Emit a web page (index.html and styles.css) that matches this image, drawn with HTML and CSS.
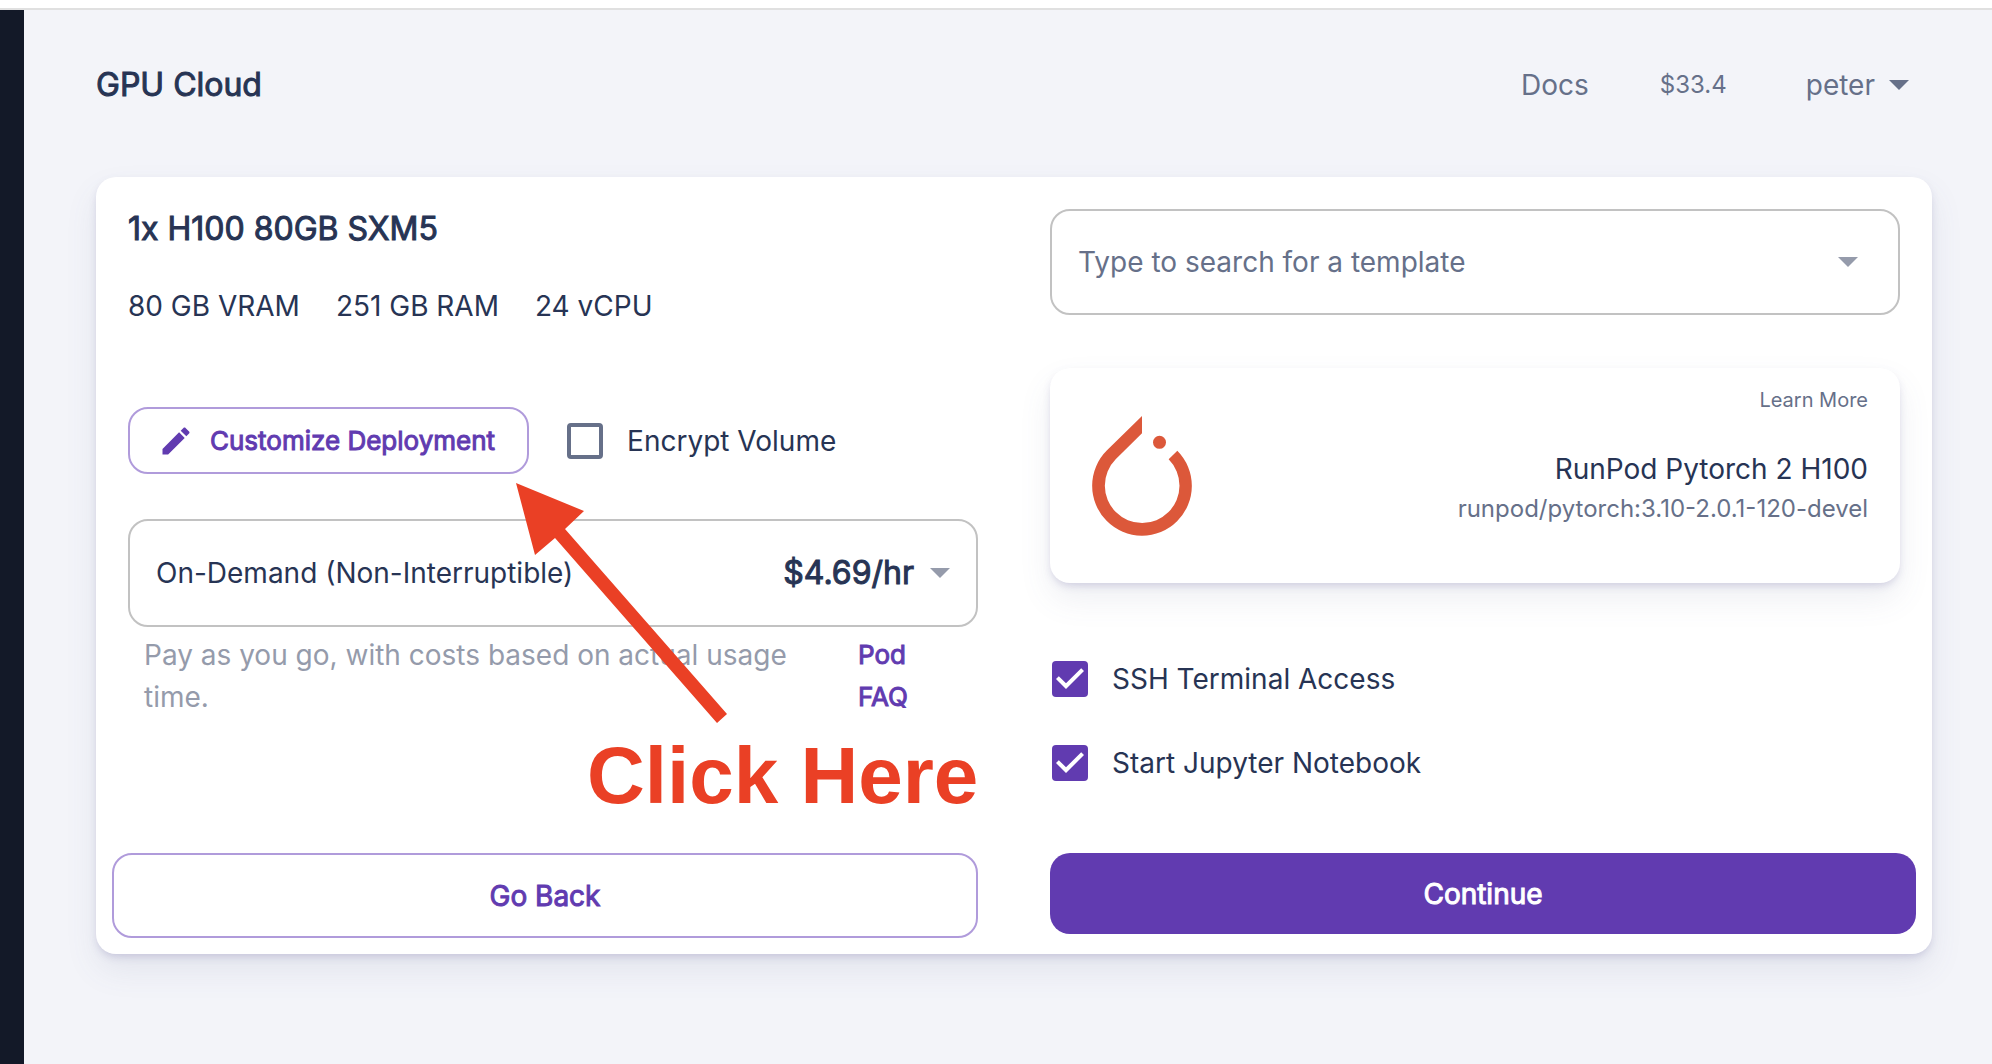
FILE: index.html
```html
<!DOCTYPE html>
<html lang="en">
<head>
<meta charset="utf-8">
<meta name="viewport" content="width=device-width, initial-scale=1">
<title>GPU Cloud</title>
<link rel="stylesheet" href="styles.css">
</head>
<body>
<div class="topbar"></div>
<div class="shell">
  <aside class="sidebar"></aside>
  <main class="page">
    <header class="header">
      <h1 class="title">GPU Cloud</h1>
      <nav class="nav">
        <a class="nav-link" href="#docs">Docs</a>
        <span class="balance">$33.4</span>
        <button class="user" type="button">peter <span class="caret"></span></button>
      </nav>
    </header>

    <section class="card">
      <div class="columns">
        <div class="column">
          <h2 class="title">1x H100 80GB SXM5</h2>
          <div class="specs"><span>80 GB VRAM</span><span>251 GB RAM</span><span>24 vCPU</span></div>
          <div class="options">
            <button class="customize" type="button">
              <svg class="pencil" viewBox="0 0 24 24" aria-hidden="true"><path d="M3 17.25V21h3.750L17.810 9.940l-3.750-3.750L3 17.250zM20.710 7.040c.39-.39.39-1.020 0-1.410l-2.340-2.340c-.39-.39-1.020-.39-1.410 0l-1.830 1.830 3.750 3.750 1.830-1.830z"/></svg>
              Customize Deployment
            </button>
            <label class="check"><input type="checkbox"> Encrypt Volume</label>
          </div>
          <div class="field pricing">
            <select class="control" aria-label="Pricing">
              <option>On-Demand (Non-Interruptible)</option>
            </select>
            <span class="price">$4.69/hr</span>
            <span class="caret muted"></span>
          </div>
          <div class="help">
            <p>Pay as you go, with costs based on actual usage time.</p>
            <a class="faq" href="#faq">Pod FAQ</a>
          </div>
          <div class="callout">
            <svg class="arrow" viewBox="0 0 212 240" aria-hidden="true"><path d="M0 0L68 28L49 46L211 231L201 240L39 55L19 72Z"/></svg>
            <span class="callout-text">Click Here</span>
          </div>
        </div>

        <div class="column">
          <div class="field search">
            <input class="control" type="text" placeholder="Type to search for a template" aria-label="Template">
            <span class="caret muted"></span>
          </div>
          <article class="template">
            <svg class="logo" viewBox="156 168 300 360" aria-hidden="true"><path d="M306 168L201 271A149.500 149.500 0 1 0 412 272L386 298A112 112 0 1 1 227 298L306 220Z"/><circle cx="358.500" cy="247" r="19.500"/></svg>
            <div class="template-text">
              <a class="learn" href="#learn">Learn More</a>
              <span class="template-name">RunPod Pytorch 2 H100</span>
              <span class="template-image">runpod/pytorch:3.10-2.0.1-120-devel</span>
            </div>
          </article>
          <div class="checks">
            <label class="check"><input type="checkbox" checked> SSH Terminal Access</label>
            <label class="check"><input type="checkbox" checked> Start Jupyter Notebook</label>
          </div>
        </div>
      </div>
      <div class="actions">
        <button class="btn btn-outline" type="button">Go Back</button>
        <button class="btn btn-solid" type="button">Continue</button>
      </div>
    </section>
  </main>
</div>
</body>
</html>
```

FILE: styles.css
```css
:root {
  --ink: #273454;
  --slate: #667089;
  --muted: #959bab;
  --purple: #613bb0;
  --lilac: #b09bdb;
  --line: #c2c2c2;
  --shadow: 0 4px 8px -2px rgba(90, 85, 150, .25), 0 16px 32px rgba(90, 95, 140, .1);
}
* { box-sizing: border-box; }
body {
  margin: 0;
  min-height: 100vh;
  display: flex;
  flex-direction: column;
  background: #f3f4f9;
  color: var(--ink);
  font: 400 28px/42px Inter, sans-serif;
}
h1, h2, p { margin: 0; }
a { color: inherit; text-decoration: none; }
button, input, select { font: inherit; color: inherit; margin: 0; }
button { cursor: pointer; }

.topbar { height: 10px; background: #fff; border-bottom: 2px solid #e0e0e0; }
.shell { flex: 1; display: flex; }
.sidebar { flex: 0 0 24px; background: #131928; }
.page { flex: 1; min-width: 0; padding: 54px 60px 54px 72px; }

.header { display: flex; justify-content: space-between; align-items: center; height: 42px; margin-bottom: 71px; }
.title { font-size: 32px; line-height: 40px; font-weight: 400; }
.title, .price, .customize, .faq, .btn { -webkit-text-stroke: 1px currentColor; }
.nav { display: flex; align-items: center; gap: 71px; padding-right: 23px; color: var(--slate); }
.balance { font-size: 24px; }
.user { display: flex; align-items: center; gap: 14px; padding: 0 0 0 8px; border: 0; background: none; }

.caret { flex: none; border: 10px solid transparent; border-top-color: var(--slate); border-bottom: 0; }
.caret.muted { border-top-color: var(--muted); }

.card { background: #fff; border-radius: 20px; box-shadow: var(--shadow); }
.columns { display: grid; grid-template-columns: 1fr 1fr; gap: 72px; padding: 32px 32px 69px; }
.column { position: relative; min-width: 0; }
.specs { display: flex; gap: 36px; margin-top: 36px; }

.options { display: flex; align-items: center; gap: 38px; margin-top: 80px; }
.customize {
  display: flex;
  align-items: center;
  gap: 16px;
  height: 67px;
  padding: 0 32px 0 28px;
  border: 2px solid var(--lilac);
  border-radius: 20px;
  background: none;
  color: var(--purple);
  font-size: 26px;
}
.pencil { width: 36px; height: 36px; fill: currentColor; }

.check { display: flex; align-items: center; gap: 24px; }
.check input { flex: none; appearance: none; width: 36px; height: 36px; border: 4px solid var(--slate); border-radius: 4px; }
.check input:checked {
  border: 0;
  background: var(--purple) url("data:image/svg+xml,%3Csvg xmlns='http://www.w3.org/2000/svg' viewBox='3 3 18 18'%3E%3Cpath fill='%23fff' d='M10 17l-5-5 1.410-1.410L10 14.170l7.590-7.590L19 8z'/%3E%3C/svg%3E");
}

.field { display: flex; align-items: center; border: 2px solid var(--line); border-radius: 20px; }
.control { flex: 1; min-width: 0; height: 42px; padding: 0; border: 0; outline: 0; background: none; appearance: none; }
.control::placeholder { color: var(--slate); opacity: 1; }
.pricing { height: 108px; margin-top: 45px; padding: 0 26px; gap: 16px; }
.price { font-size: 32px; }
.search { height: 106px; padding: 0 40px 0 26px; }

.help { display: flex; gap: 68px; margin-top: 7px; padding: 0 64px 0 16px; color: var(--muted); }
.help p { flex: 1; }
.faq { flex: 0 0 56px; color: var(--purple); font-size: 26px; }

.callout { position: absolute; left: 388px; top: 274px; display: flex; flex-direction: column; color: #ea4025; pointer-events: none; }
.arrow { width: 212px; height: 240px; fill: currentColor; }
.callout-text { margin: 13px 0 0 71px; font: 700 80px/80px "Liberation Sans", Arial, sans-serif; white-space: nowrap; }

.template { display: flex; justify-content: space-between; align-items: center; height: 215px; margin-top: 53px; padding: 0 32px 0 42px; border-radius: 20px; box-shadow: var(--shadow); }
.logo { width: 100px; height: 120px; fill: #dc583a; }
.template-text { display: flex; flex-direction: column; align-self: flex-start; text-align: right; padding-top: 16px; }
.learn { color: var(--slate); font-size: 20px; line-height: 32px; }
.template-name { margin-top: 32px; }
.template-image { color: var(--slate); font-size: 24px; line-height: 38px; }

.checks { display: flex; flex-direction: column; gap: 42px; margin-top: 75px; padding-left: 2px; }

.actions { display: grid; grid-template-columns: 1fr 1fr; align-items: start; gap: 72px; padding: 0 16px 16px; }
.btn { border-radius: 20px; }
.btn-outline { height: 85px; border: 2px solid var(--lilac); background: none; color: var(--purple); }
.btn-solid { height: 81px; border: 0; background: var(--purple); color: #fff; }
```
